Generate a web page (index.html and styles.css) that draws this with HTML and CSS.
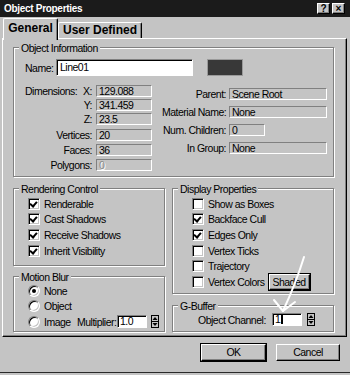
FILE: index.html
```html
<!DOCTYPE html>
<html lang="en">
<head>
    <meta charset="UTF-8">
    <title>Object Properties</title>
    <link rel="stylesheet" href="styles.css">
</head>
<body>
    <div class="dialog">
        <div class="titlebar">
            <span class="title">Object Properties</span>
            <div class="caption-buttons">
                <span class="cap-btn">?</span>
                <span class="cap-btn">×</span>
            </div>
        </div>

        <div class="tabs">
            <div class="tab active">General</div>
            <div class="tab">User Defined</div>
        </div>

        <div class="panel">
            <div class="group info">
                <div class="legend">Object Information</div>
                <div class="info-body">
                    <div class="name-row">
                        <span class="name-label">Name:</span>
                        <div class="field white name-field">Line01</div>
                        <div class="swatch"></div>
                    </div>
                    <div class="info-cols">
                        <div class="info-left">
                            <div class="dims">
                                <span class="dim-label">Dimensions:</span>
                                <span class="axis">X:</span><div class="field">129.088</div>
                                <span class="axis">Y:</span><div class="field">341.459</div>
                                <span class="axis">Z:</span><div class="field">23.5</div>
                            </div>
                            <div class="counts">
                                <span class="rlabel">Vertices:</span><div class="field">20</div>
                                <span class="rlabel">Faces:</span><div class="field">36</div>
                                <span class="rlabel">Polygons:</span><div class="field disabled">0</div>
                            </div>
                        </div>
                        <div class="info-right">
                            <span class="rlabel">Parent:</span><div class="field">Scene Root</div>
                            <span class="rlabel">Material Name:</span><div class="field">None</div>
                            <span class="rlabel">Num. Children:</span><div class="field short">0</div>
                            <span class="rlabel">In Group:</span><div class="field">None</div>
                        </div>
                    </div>
                </div>
            </div>

            <div class="lower">
                <div class="col-left">
                    <div class="group render">
                        <div class="legend">Rendering Control</div>
                        <div class="options">
                            <div class="opt"><span class="check on"></span>Renderable</div>
                            <div class="opt"><span class="check on"></span>Cast Shadows</div>
                            <div class="opt"><span class="check on"></span>Receive Shadows</div>
                            <div class="opt"><span class="check on"></span>Inherit Visibility</div>
                        </div>
                    </div>
                    <div class="group motion">
                        <div class="legend">Motion Blur</div>
                        <div class="options">
                            <div class="opt"><span class="radio on"></span>None</div>
                            <div class="opt"><span class="radio"></span>Object</div>
                            <div class="opt">
                                <span class="radio"></span><span class="image-label">Image</span>
                                <span class="mult-label">Multiplier:</span>
                                <div class="field white small-input">1.0</div>
                                <svg class="spin" width="8" height="13" viewBox="0 0 8 13">
                                    <rect x="0.5" y="0.5" width="7" height="12" fill="#c4c4c4" stroke="#000"/>
                                    <path d="M1 6.5H7" stroke="#000"/>
                                    <path d="M4 2L6.5 5H1.5Z" fill="#000"/>
                                    <path d="M4 11L6.5 8H1.5Z" fill="#000"/>
                                </svg>
                            </div>
                        </div>
                    </div>
                </div>
                <div class="col-right">
                    <div class="group display">
                        <div class="legend">Display Properties</div>
                        <div class="options">
                            <div class="opt"><span class="check"></span>Show as Boxes</div>
                            <div class="opt"><span class="check on"></span>Backface Cull</div>
                            <div class="opt"><span class="check on"></span>Edges Only</div>
                            <div class="opt"><span class="check"></span>Vertex Ticks</div>
                            <div class="opt"><span class="check"></span>Trajectory</div>
                            <div class="opt"><span class="check"></span>Vertex Colors<span class="btn shaded">Shaded</span></div>
                        </div>
                    </div>
                    <div class="group gbuffer">
                        <div class="legend">G-Buffer</div>
                        <div class="channel-row">
                            <span class="channel-label">Object Channel:</span>
                            <div class="field white small-input">1<span class="caret"></span></div>
                            <svg class="spin" width="8" height="13" viewBox="0 0 8 13">
                                <rect x="0.5" y="0.5" width="7" height="12" fill="#c4c4c4" stroke="#000"/>
                                <path d="M1 6.5H7" stroke="#000"/>
                                <path d="M4 2L6.5 5H1.5Z" fill="#000"/>
                                <path d="M4 11L6.5 8H1.5Z" fill="#000"/>
                            </svg>
                        </div>
                    </div>
                </div>
            </div>
        </div>

        <div class="buttons">
            <span class="btn big default">OK</span>
            <span class="btn big">Cancel</span>
        </div>

        <!-- hand drawn arrow on the screenshot -->
        <svg class="arrow" width="350" height="375" viewBox="0 0 350 375">
            <path d="M304 257 Q296 283 283 311" stroke="#fff" stroke-width="2" fill="none" stroke-linecap="round"/>
            <path d="M274 300 L283 311 L295 302" stroke="#fff" stroke-width="2" fill="none" stroke-linecap="round" stroke-linejoin="round"/>
        </svg>
    </div>
</body>
</html>
```

FILE: styles.css
```css
body {
    margin: 0;
    background-color: #c4c4c4;
    font-family: "Liberation Sans", Arial, sans-serif;
    font-size: 10.5px;
    letter-spacing: -0.5px;
    color: #000;
}
.dialog {
    position: relative;
    width: 350px;
    height: 372px;
    overflow: hidden;
    background-color: #c4c4c4;
    border-bottom: 1px solid #2a2a2a;
}
.titlebar {
    display: flex;
    align-items: center;
    justify-content: space-between;
    height: 17px;
    padding: 0 5px 0 4px;
    background-color: #1b1b1b;
}
.title {
    color: #fff;
    font-weight: bold;
    font-size: 10px;
    letter-spacing: -0.3px;
}
.caption-buttons {
    display: flex;
    gap: 2px;
}
.cap-btn {
    box-sizing: border-box;
    width: 13px;
    height: 11px;
    background-color: #c4c4c4;
    border: 1px solid;
    border-color: #fff #000 #000 #fff;
    box-shadow: inset -1px -1px #808080;
    font-weight: bold;
    font-size: 10px;
    line-height: 9px;
    letter-spacing: 0;
    text-align: center;
}

/* tabs */
.tabs {
    display: flex;
    align-items: flex-end;
    height: 21px;
    padding-left: 3px;
}
.tab {
    box-sizing: border-box;
    width: 84px;
    height: 16px;
    border: 1px solid;
    border-color: #fff #000 transparent #fff;
    border-bottom: none;
    border-radius: 2px 2px 0 0;
    box-shadow: inset -1px 0 #808080;
    font-weight: bold;
    font-size: 12px;
    letter-spacing: 0;
    line-height: 15px;
    text-align: center;
}
.tab.active {
    position: relative;
    z-index: 1;
    width: 55px;
    height: 22px;
    margin-bottom: -2px;
    line-height: 19px;
    background-color: #c4c4c4;
}
.panel {
    margin: 0 3px 0 2px;
    padding: 8px 12px 4px 10px;
    border: 1px solid;
    border-color: #fff #000 #000 #fff;
    box-shadow: inset -1px -1px #808080;
}

/* group boxes */
.group {
    box-sizing: border-box;
    border: 1px solid #808080;
    box-shadow: inset 1px 1px #fff, 1px 1px #fff;
}
.legend {
    width: fit-content;
    margin: -6px 0 0 5px;
    padding: 0 2px;
    line-height: 12px;
    background-color: #c4c4c4;
}
.field {
    box-sizing: border-box;
    height: 12px;
    padding-left: 2px;
    border: 1px solid;
    border-color: #808080 #fff #fff #808080;
    line-height: 10px;
    white-space: nowrap;
    overflow: hidden;
}
.field.white {
    background-color: #fff;
    box-shadow: inset 1px 1px #000;
}
.field.disabled {
    color: #8a8a8a;
    text-shadow: 1px 1px #fff;
}

.info {
    height: 130px;
}
.info-body {
    padding-left: 11px;
}
.name-row {
    display: flex;
    align-items: center;
    height: 17px;
    margin-top: 5px;
}
.name-label {
    width: 31px;
}
.name-field {
    width: 137px;
    height: 17px;
    padding-left: 3px;
    line-height: 15px;
}
.swatch {
    box-sizing: border-box;
    width: 36px;
    height: 17px;
    margin-left: 14px;
    border: 1px solid #9a9a9a;
    background-color: #383838;
}
.info-cols {
    display: flex;
    margin-top: 9px;
}
.dims {
    display: grid;
    grid-template-columns: 55px 16px 56px;
    grid-auto-rows: 12px;
    row-gap: 2px;
    line-height: 12px;
}
.dim-label {
    grid-column: 1;
}
.axis {
    grid-column: 2;
    padding-right: 4px;
    text-align: right;
}
.dims .field {
    grid-column: 3;
}
.counts {
    display: grid;
    grid-template-columns: 71px 56px;
    grid-auto-rows: 12px;
    row-gap: 3px;
    margin-top: 4px;
    line-height: 12px;
}
.rlabel {
    padding-right: 4px;
    text-align: right;
    white-space: nowrap;
}
.info-right {
    display: grid;
    grid-template-columns: 67px 98px;
    grid-auto-rows: 12px;
    row-gap: 6px;
    margin: 3px 0 0 10px;
    line-height: 12px;
}
.info-right .rlabel {
    padding-right: 3px;
}
.field.short {
    width: 36px;
}

/* lower groups */
.lower {
    display: flex;
    gap: 7px;
    margin-top: 11px;
}
.col-left,
.col-right {
    display: flex;
    flex-direction: column;
}
.col-left {
    width: 152px;
    gap: 10px;
}
.col-right {
    width: 162px;
    gap: 11px;
}
.render {
    height: 78px;
}
.render .options {
    padding: 1px 0 0 14px;
}
.motion {
    height: 56px;
}
.motion .options {
    padding-left: 14px;
}
.display {
    height: 106px;
}
.display .options {
    padding: 1px 0 0 19px;
}
.gbuffer {
    height: 27px;
}
.opt {
    display: flex;
    align-items: center;
    height: 15.6px;
    white-space: nowrap;
}
.check,
.radio {
    box-sizing: border-box;
    flex: none;
    position: relative;
    width: 12px;
    height: 12px;
    margin-right: 4px;
    background-color: #fff;
    border: 1px solid;
    border-color: #808080 #fff #fff #808080;
    box-shadow: inset 1px 1px #000, inset -1px -1px #c4c4c4;
}
.check.on::after {
    content: "";
    position: absolute;
    left: 2px;
    top: 1px;
    width: 3px;
    height: 5px;
    border: solid #000;
    border-width: 0 2px 2px 0;
    transform: rotate(40deg);
}
.radio {
    border-radius: 50%;
}
.radio.on::after {
    content: "";
    position: absolute;
    left: 3px;
    top: 3px;
    width: 4px;
    height: 4px;
    border-radius: 50%;
    background-color: #000;
}
.image-label {
    width: 33px;
}
.mult-label {
    width: 40px;
}
.small-input {
    width: 30px;
    height: 13px;
    line-height: 11px;
}
.spin {
    flex: none;
    margin-left: 4px;
}
.channel-row {
    display: flex;
    align-items: center;
    height: 13px;
    margin-top: 1px;
    padding-left: 25px;
}
.channel-label {
    width: 74px;
}
.channel-row .spin {
    margin-left: 5px;
}
.caret {
    display: inline-block;
    width: 2px;
    height: 9px;
    margin-left: 1px;
    vertical-align: -1px;
    background-color: #000;
}
.btn {
    box-sizing: border-box;
    display: inline-block;
    border: 1px solid;
    border-color: #fff #000 #000 #fff;
    box-shadow: inset -1px -1px #808080;
    text-align: center;
}
.shaded {
    width: 41px;
    height: 16px;
    margin-left: 4px;
    line-height: 14px;
    outline: 1px solid #000;
}
.buttons {
    display: flex;
    justify-content: flex-end;
    gap: 10px;
    margin-top: 7px;
    padding-right: 10px;
}
.big {
    width: 64px;
    height: 17px;
    line-height: 15px;
}
.default {
    width: 65px;
    outline: 1px solid #000;
}
.arrow {
    position: absolute;
    left: 0;
    top: 0;
    pointer-events: none;
}
```
